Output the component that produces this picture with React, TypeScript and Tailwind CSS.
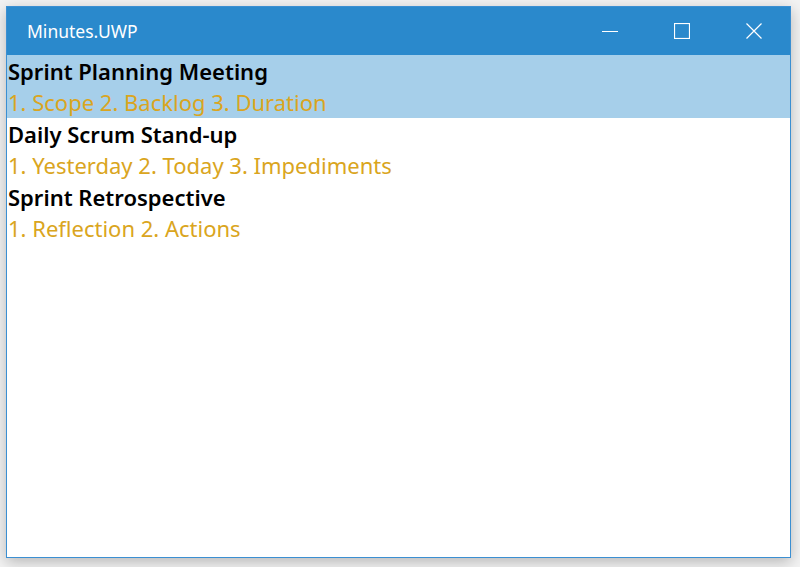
const ITEMS = [
  { title: "Sprint Planning Meeting", agenda: "1. Scope 2. Backlog 3. Duration" },
  { title: "Daily Scrum Stand-up", agenda: "1. Yesterday 2. Today 3. Impediments" },
  { title: "Sprint Retrospective", agenda: "1. Reflection 2. Actions" },
];

export default function App() {
  return (
    <div className="w-[800px] h-[567px] bg-[#f3f3f3] pl-[6px] pt-[6px] overflow-hidden font-['Noto_Sans',sans-serif]">
      <div className="w-[785px] h-[552px] border border-[#3b8fd2] bg-white flex flex-col shadow-[0_4px_14px_rgba(0,0,0,0.25)]">
        <div className="h-[48px] bg-[#2a89cc] flex items-center text-white shrink-0">
          <span className="pl-[20px] text-[17.5px] flex-1">Minutes.UWP</span>
          <button className="w-[72px] h-full flex items-center justify-center">
            <svg width="16" height="16" viewBox="0 0 16 16"><path d="M0 8.5h16" stroke="white" strokeWidth="1" /></svg>
          </button>
          <button className="w-[72px] h-full flex items-center justify-center">
            <svg width="16" height="16" viewBox="0 0 16 16"><rect x="0.5" y="0.5" width="15" height="15" fill="none" stroke="white" strokeWidth="1.2" /></svg>
          </button>
          <button className="w-[72px] h-full flex items-center justify-center">
            <svg width="16" height="16" viewBox="0 0 16 16"><path d="M0.5 0.5l15 15M15.5 0.5l-15 15" stroke="white" strokeWidth="1.2" /></svg>
          </button>
        </div>
        <div className="flex flex-col">
          {ITEMS.map((item, i) => (
            <div key={item.title} className={i === 0 ? "bg-[#a6cfea] pl-[1px] pt-[1px]" : "pl-[1px] pt-[1px]"}>
              <div className="text-[22px] leading-[31px] font-semibold text-black">{item.title}</div>
              <div className="text-[22px] leading-[31px] text-[#daa520]">{item.agenda}</div>
            </div>
          ))}
        </div>
      </div>
    </div>
  );
}
